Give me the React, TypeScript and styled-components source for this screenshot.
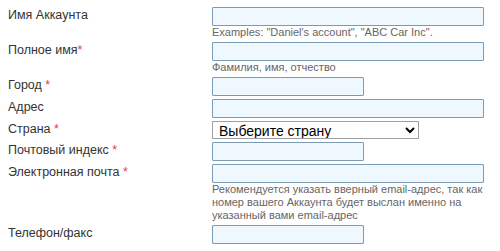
import styled, { createGlobalStyle } from 'styled-components';

const GlobalStyle = createGlobalStyle`
  body {
    margin: 0;
    background: #ffffff;
    font-family: "Liberation Sans", Arial, sans-serif;
  }
`;

const FormStyled = styled.form`
  display: grid;
  grid-template-columns: 204px 1fr;
  row-gap: 3px;
  padding: 7px 8px;
`;

const LabelStyled = styled.label`
  font-size: 12.5px;
  line-height: 15px;
  color: #333333;
  padding-top: 1px;
`;

const StarStyled = styled.span`
  color: #e0394c;
`;

const FieldStyled = styled.div`
  display: flex;
  flex-direction: column;
`;

const InputStyled = styled.input<{ $short?: boolean }>`
  box-sizing: border-box;
  width: ${(p) => (p.$short ? '152px' : '272px')};
  height: 19px;
  margin: 0;
  padding: 1px 3px;
  border: 1px solid #7b9bb5;
  border-radius: 1px;
  background: #eff8ff;
  font-family: inherit;
  font-size: 13px;
  outline: none;
`;

const SelectStyled = styled.select`
  box-sizing: border-box;
  width: 207px;
  height: 18px;
  margin: 0;
  padding: 0 2px;
  border: 1px solid #a0a0a0;
  border-radius: 0;
  background: #ffffff;
  color: #000000;
  font-family: inherit;
  font-size: 14px;
  line-height: 16px;
`;

const HelpStyled = styled.div`
  font-size: 11px;
  line-height: 13px;
  color: #666666;
`;

interface RowProps {
  label: string;
  required?: boolean;
  tight?: boolean;
  short?: boolean;
  help?: string[];
}

const Row = ({ label, required, tight, short, help }: RowProps) => (
  <>
    <LabelStyled>
      {label}
      {required && (
        <StarStyled>{tight ? '*' : ' *'}</StarStyled>
      )}
    </LabelStyled>
    <FieldStyled>
      <InputStyled type="text" $short={short} />
      {help && (
        <HelpStyled>
          {help.map((line, ix) => (
            <div key={ix}>{line}</div>
          ))}
        </HelpStyled>
      )}
    </FieldStyled>
  </>
);

const App = () => {
  return (
    <>
      <GlobalStyle />
      <FormStyled>
        <Row
          label="Имя Аккаунта"
          help={['Examples: "Daniel\'s account", "ABC Car Inc".']}
        />
        <Row
          label="Полное имя"
          required
          tight
          help={['Фамилия, имя, отчество']}
        />
        <Row label="Город" required short />
        <Row label="Адрес" />
        <LabelStyled>
          Страна<StarStyled> *</StarStyled>
        </LabelStyled>
        <FieldStyled>
          <SelectStyled defaultValue="">
            <option value="">Выберите страну</option>
          </SelectStyled>
        </FieldStyled>
        <Row label="Почтовый индекс" required short />
        <Row
          label="Электронная почта"
          required
          help={[
            'Рекомендуется указать вверный email-адрес, так как',
            'номер вашего Аккаунта будет выслан именно на',
            'указанный вами email-адрес'
          ]}
        />
        <Row label="Телефон/факс" short />
      </FormStyled>
    </>
  );
};

export default App;
